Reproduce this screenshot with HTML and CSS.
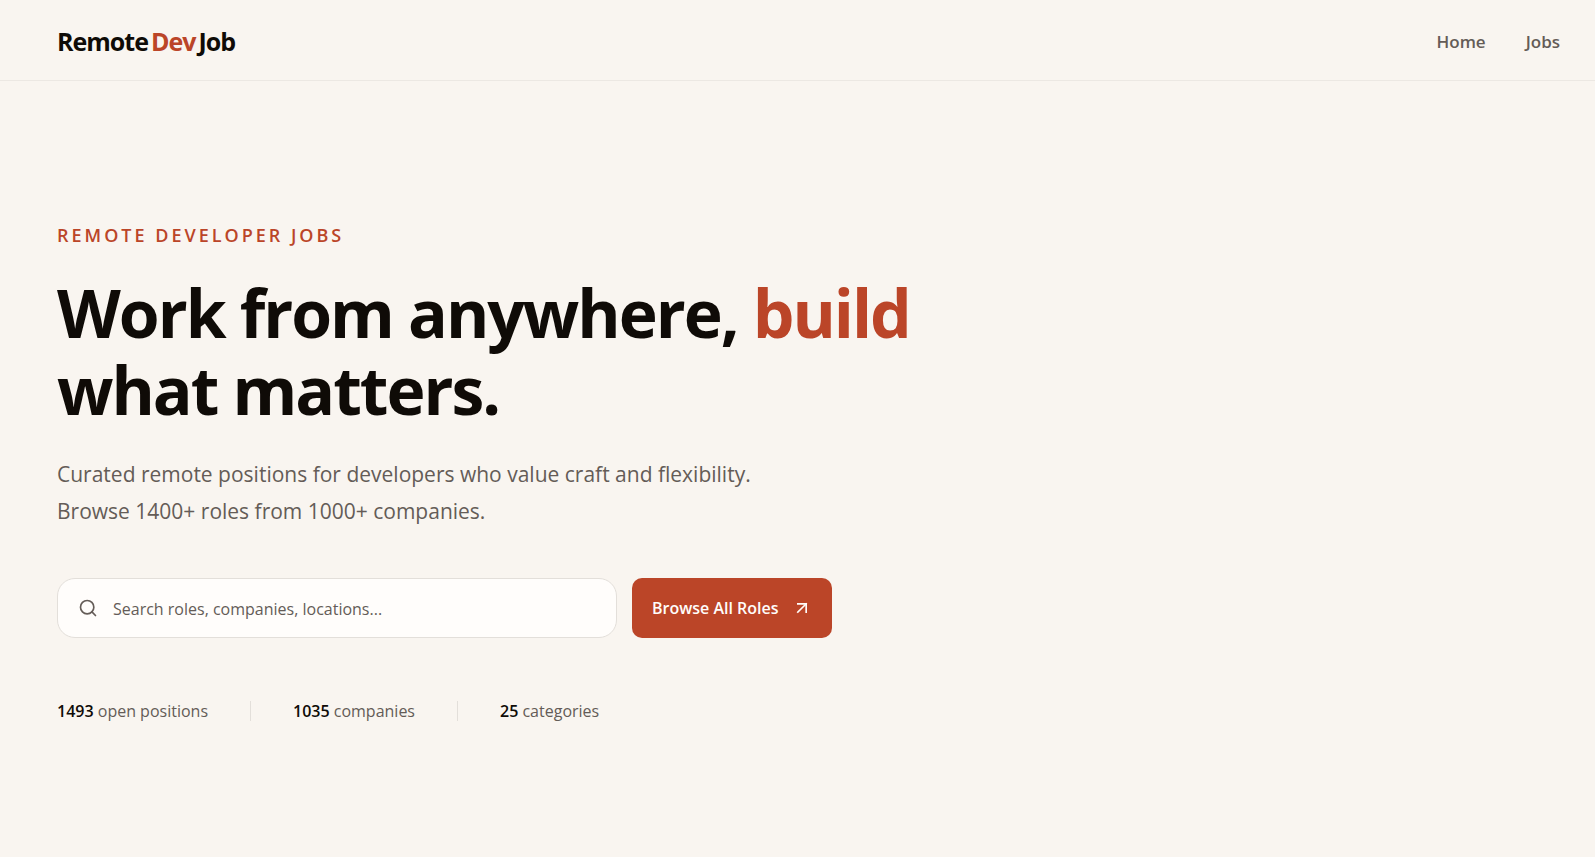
FILE: index.html
```
<!DOCTYPE html>
<html lang="en">
  <head>
    <meta charset="UTF-8" />
    <meta name="viewport" content="width=device-width, initial-scale=1.0" />
    <title>RemoteDevJob</title>
    <link rel="stylesheet" href="styles.css">
  </head>
  <body>
    <header class="header">
      <a class="logo" href="#"><span>Remote</span><span class="accent">Dev</span><span>Job</span></a>
      <nav class="nav">
        <a href="#">Home</a>
        <a href="#">Jobs</a>
      </nav>
    </header>

    <main class="hero">
      <p class="eyebrow">Remote Developer Jobs</p>
      <h1 class="title">Work from anywhere, <span class="accent">build</span> what matters.</h1>
      <p class="lead">
        Curated remote positions for developers who value craft and flexibility.
        <br />Browse 1400+ roles from 1000+ companies.
      </p>

      <form class="search" onsubmit="return false;">
        <label class="search-box">
          <svg class="search-icon" viewBox="0 0 24 24" fill="none" stroke="currentColor" stroke-width="2" stroke-linecap="round" stroke-linejoin="round" aria-hidden="true">
            <circle cx="11" cy="11" r="8" />
            <path d="m21 21-4.3-4.3" />
          </svg>
          <input type="text" placeholder="Search roles, companies, locations..." aria-label="Search jobs" />
        </label>
        <button class="browse" type="button">
          Browse All Roles
          <svg class="arrow" viewBox="0 0 24 24" fill="none" stroke="currentColor" stroke-width="2" stroke-linecap="square" aria-hidden="true">
            <path d="M7 7h10v10" />
            <path d="M7 17 17 7" />
          </svg>
        </button>
      </form>

      <ul class="stats">
        <li><strong>1493</strong> open positions</li>
        <li><strong>1035</strong> companies</li>
        <li><strong>25</strong> categories</li>
      </ul>
    </main>
  </body>
</html>
```
FILE: styles.css
```
* {
  box-sizing: border-box;
}

body {
  margin: 0;
  min-height: 100vh;
  background-color: #f9f5f0;
  color: #0f0b07;
  font-family: "Open Sans", "Noto Sans", sans-serif;
  font-size: 16px;
}

a {
  color: inherit;
  text-decoration: none;
}

.accent {
  color: #bb4528;
}

/* Header */
.header {
  display: flex;
  align-items: center;
  justify-content: space-between;
  height: 81px;
  padding: 2px 35px 0 57px;
  border-bottom: 1px solid #ece8e3;
}

.logo {
  display: flex;
  gap: 3px;
  font-size: 25px;
  font-weight: 700;
  letter-spacing: -1px;
}

.nav {
  display: flex;
  gap: 40px;
  color: #645c57;
  font-size: 17px;
  font-weight: 600;
}

/* Hero */
.hero {
  padding: 141px 57px 80px;
}

.eyebrow {
  margin: 0 0 26px;
  color: #bb4528;
  font-size: 18px;
  font-weight: 600;
  line-height: 26px;
  letter-spacing: 3px;
  text-transform: uppercase;
}

.title {
  max-width: 900px;
  margin: 0 0 28px;
  font-size: 66px;
  font-weight: 700;
  line-height: 77px;
  letter-spacing: -2px;
}

.lead {
  margin: 0 0 48px;
  color: #645c57;
  font-size: 21px;
  line-height: 37px;
}

.search {
  display: flex;
  gap: 15px;
  max-width: 775px;
  margin-bottom: 63px;
}

.search-box {
  display: flex;
  flex: 1;
  align-items: center;
  gap: 15px;
  height: 60px;
  padding: 0 20px;
  border: 1px solid #e3dfda;
  border-radius: 18px;
  background-color: #fffdfb;
  color: #645c57;
}

.search-box input {
  flex: 1;
  min-width: 0;
  padding: 2px 0 0;
  border: 0;
  outline: 0;
  background: none;
  color: #0f0b07;
  font: inherit;
}

.search-box input::placeholder {
  color: #645c57;
  opacity: 1;
}

.search-icon {
  width: 20px;
  height: 20px;
}

.browse {
  display: flex;
  align-items: center;
  justify-content: space-between;
  min-width: 200px;
  padding: 0 20px;
  border: 0;
  border-radius: 10px;
  background-color: #bb4528;
  color: #fffdfb;
  font: inherit;
  font-weight: 600;
  white-space: nowrap;
}

.arrow {
  width: 20px;
  height: 20px;
}

/* Stats */
.stats {
  display: flex;
  margin: 0;
  padding: 0;
  list-style: none;
  color: #645c57;
  line-height: 20px;
}

.stats li + li {
  margin-left: 42px;
  padding-left: 42px;
  border-left: 1px solid #e3dfda;
}

.stats strong {
  color: #0f0b07;
  font-weight: 600;
}
```
